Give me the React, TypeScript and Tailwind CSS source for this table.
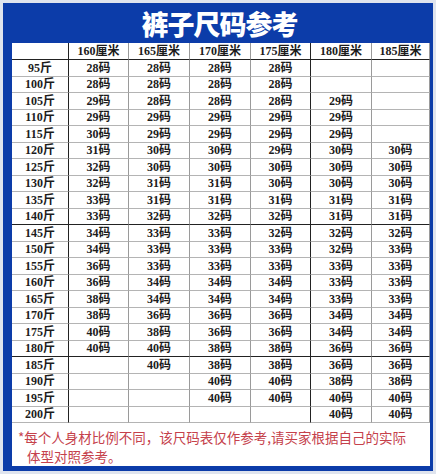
const heights = ["160厘米", "165厘米", "170厘米", "175厘米", "180厘米", "185厘米"];

const rows: [string, (number | null)[]][] = [
  ["95斤", [28, 28, 28, 28, null, null]],
  ["100斤", [28, 28, 28, 28, null, null]],
  ["105斤", [29, 28, 28, 28, 29, null]],
  ["110斤", [29, 29, 29, 29, 29, null]],
  ["115斤", [30, 29, 29, 29, 29, null]],
  ["120斤", [31, 30, 30, 29, 30, 30]],
  ["125斤", [32, 30, 30, 30, 30, 30]],
  ["130斤", [32, 31, 31, 30, 30, 30]],
  ["135斤", [33, 31, 31, 31, 31, 31]],
  ["140斤", [33, 32, 32, 32, 31, 31]],
  ["145斤", [34, 33, 33, 32, 32, 32]],
  ["150斤", [34, 33, 33, 33, 32, 33]],
  ["155斤", [36, 33, 33, 33, 33, 33]],
  ["160斤", [36, 34, 34, 34, 33, 33]],
  ["165斤", [38, 34, 34, 34, 33, 33]],
  ["170斤", [38, 36, 36, 36, 34, 34]],
  ["175斤", [40, 38, 36, 36, 34, 34]],
  ["180斤", [40, 40, 38, 38, 36, 36]],
  ["185斤", [null, 40, 38, 38, 36, 36]],
  ["190斤", [null, null, 40, 40, 38, 38]],
  ["195斤", [null, null, 40, 40, 40, 40]],
  ["200斤", [null, null, null, null, 40, 40]],
];

// columns after which the vertical rule is dark
const darkCols = [0, 4];
// rows after which the horizontal rule is dark
const darkRows = [9, 17];

function Cell({ text, col, row }: { text: string; col: number; row: number }) {
  const dark = darkCols.includes(col);
  const darkB = row < 0 || darkRows.includes(row);
  return (
    <div
      className={
        "flex items-center justify-center border-r border-b leading-none " +
        (dark ? "border-r-[#222] " : "border-r-[#9a9a9a] ") +
        (darkB ? "border-b-[#222]" : "border-b-[#b4b4b4]")
      }
    >
      {text}
    </div>
  );
}

export default function App() {
  return (
    <div className="w-[436px] h-[474px] bg-[#dfe4ee] p-[3px]">
      <div className="w-full h-full bg-[#0c3ca9] pl-[9px] pr-[3px] pb-[5px] flex flex-col">
        <div
          className="h-[40px] pt-[3px] flex items-center justify-center text-white text-[27px] font-black tracking-[-1px] pr-[3px]"
          style={{ fontFamily: '"Noto Sans CJK SC", sans-serif' }}
        >
          裤子尺码参考
        </div>
        <div className="flex-1 bg-white flex flex-col">
          <div
            className="grid grid-cols-[57px_60px_61px_61px_60px_61px_58px] grid-rows-[17px_repeat(22,16.5px)] text-[12px] font-bold text-[#1c1c1c]"
            style={{ fontFamily: '"Liberation Serif", "Noto Sans CJK SC", serif' }}
          >
            <Cell text="" col={0} row={-1} />
            {heights.map((h, i) => (
              <Cell key={h} text={h} col={i + 1} row={-1} />
            ))}
            {rows.map(([w, sizes], r) => (
              <div key={w} className="contents">
                <Cell text={w} col={0} row={r} />
                {sizes.map((s, c) => (
                  <Cell key={c} text={s === null ? "" : `${s}码`} col={c + 1} row={r} />
                ))}
              </div>
            ))}
          </div>
          <p
            className="pl-[15px] pt-[5px] -indent-[9px] text-[13.5px] leading-[19px] text-[#c5414b]"
            style={{ fontFamily: '"Noto Sans CJK SC", sans-serif' }}
          >
            *每个人身材比例不同，该尺码表仅作参考,请买家根据自己的实际
            <br />
            体型对照参考。
          </p>
        </div>
      </div>
    </div>
  );
}
